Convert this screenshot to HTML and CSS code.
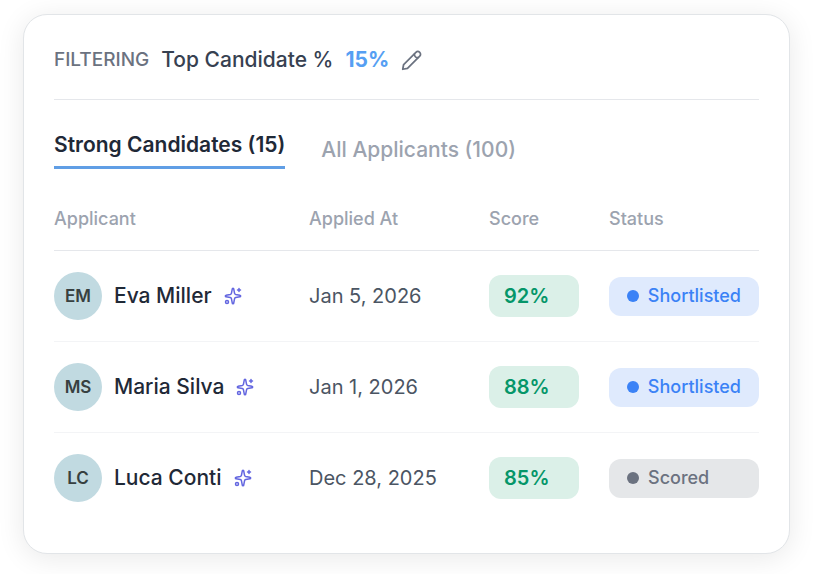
FILE: index.html
```html
<!DOCTYPE html>
<html lang="en">

<head>
    <meta charset="UTF-8">
    <meta name="viewport" content="width=device-width, initial-scale=1.0">
    <title>Candidates</title>
    <link rel="stylesheet" href="styles.css">
</head>

<body>
    <svg class="icon-defs" aria-hidden="true">
        <symbol id="sparkles" viewBox="0 0 24 24">
            <path d="M11 2.8a1 1 0 0 1 2 0l1.1 5.6a2 2 0 0 0 1.5 1.5l5.6 1.1a1 1 0 0 1 0 2l-5.6 1.1a2 2 0 0 0-1.5 1.5L13 21.2a1 1 0 0 1-2 0l-1.1-5.6a2 2 0 0 0-1.5-1.5L2.8 13a1 1 0 0 1 0-2l5.6-1.1a2 2 0 0 0 1.5-1.5z" />
            <path d="M20 2v4M22 4h-4" />
            <circle cx="4" cy="20" r="2" />
        </symbol>
    </svg>

    <main class="card">
        <div class="filter">
            <span class="filter-label">FILTERING</span>
            <span class="filter-name">Top Candidate %</span>
            <span class="filter-value">15%</span>
            <button class="edit" aria-label="Edit filter">
                <svg viewBox="0 0 24 24">
                    <path d="M2 22l1-5.4L17 2.7a3.1 3.1 0 0 1 4.4 4.4L7.4 21z" />
                    <path d="M15.4 4.4c-.7 2.4 1.8 5 4.4 4.3" />
                </svg>
            </button>
        </div>

        <div class="tabs">
            <button class="tab active">Strong Candidates (15)</button>
            <button class="tab">All Applicants (100)</button>
        </div>

        <table class="applicants">
            <thead>
                <tr>
                    <th>Applicant</th>
                    <th class="col-date">Applied At</th>
                    <th class="col-score">Score</th>
                    <th class="col-status">Status</th>
                </tr>
            </thead>
            <tbody>
                <tr>
                    <td>
                        <div class="person">
                            <span class="avatar">EM</span>
                            <span class="name">Eva Miller</span>
                            <svg class="sparkles"><use href="#sparkles" /></svg>
                        </div>
                    </td>
                    <td class="date">Jan 5, 2026</td>
                    <td><div class="score">92%</div></td>
                    <td><div class="status shortlisted">Shortlisted</div></td>
                </tr>
                <tr>
                    <td>
                        <div class="person">
                            <span class="avatar">MS</span>
                            <span class="name">Maria Silva</span>
                            <svg class="sparkles"><use href="#sparkles" /></svg>
                        </div>
                    </td>
                    <td class="date">Jan 1, 2026</td>
                    <td><div class="score">88%</div></td>
                    <td><div class="status shortlisted">Shortlisted</div></td>
                </tr>
                <tr>
                    <td>
                        <div class="person">
                            <span class="avatar">LC</span>
                            <span class="name">Luca Conti</span>
                            <svg class="sparkles"><use href="#sparkles" /></svg>
                        </div>
                    </td>
                    <td class="date">Dec 28, 2025</td>
                    <td><div class="score">85%</div></td>
                    <td><div class="status scored">Scored</div></td>
                </tr>
            </tbody>
        </table>
    </main>
</body>

</html>
```
FILE: styles.css
```css
* {
    box-sizing: border-box;
    margin: 0;
    padding: 0;
}

body {
    padding: 14px 26px 20px 23px;
    background: #fff;
    font-family: Inter, "Liberation Sans", sans-serif;
    font-size: 20px;
    line-height: 26px;
    color: #1f2937;
}

button {
    border: none;
    background: none;
    font: inherit;
    color: inherit;
    cursor: pointer;
}

.icon-defs {
    position: absolute;
    width: 0;
    height: 0;
}

.card {
    padding: 30px;
    background: #fff;
    border: 1px solid #e2e5e8;
    border-radius: 24px;
    box-shadow: 0 4px 28px rgba(0, 0, 0, 0.09);
}

/* Filter bar */
.filter {
    display: flex;
    align-items: center;
    gap: 12px;
    padding-bottom: 24px;
    border-bottom: 1px solid #e5e7eb;
    line-height: 30px;
}

.filter-label {
    font-size: 19px;
    font-weight: 500;
    color: #6b7280;
}

.filter-name {
    font-size: 21px;
    font-weight: 500;
    color: #374151;
}

.filter-value {
    font-size: 21px;
    font-weight: 700;
    color: #569ff3;
}

.edit {
    display: flex;
}

.edit svg {
    width: 21px;
    height: 21px;
    fill: none;
    stroke: #6b7280;
    stroke-width: 2;
    stroke-linejoin: round;
}

/* Tabs */
.tabs {
    display: flex;
    align-items: center;
    gap: 36px;
    padding: 31px 0;
}

.tab {
    font-size: 21px;
    font-weight: 500;
    color: #9ca3af;
}

.tab.active {
    padding: 1px 0 8px;
    border-bottom: 3px solid #609ee5;
    font-weight: 600;
    color: #1f2937;
}

/* Table */
.applicants {
    width: 100%;
    table-layout: fixed;
    border-spacing: 0;
}

th {
    padding: 6px 0 18px;
    border-bottom: 1px solid #e5e7eb;
    font-size: 18px;
    font-weight: 500;
    text-align: left;
    color: #9ca3af;
}

td {
    height: 91px;
    border-bottom: 1px solid #f3f4f6;
}

tr:last-child td {
    height: 90px;
    border-bottom: none;
}

.col-date {
    width: 180px;
}

.col-score {
    width: 120px;
}

.col-status {
    width: 150px;
}

.person {
    display: flex;
    align-items: center;
    gap: 12px;
}

.avatar {
    display: flex;
    align-items: center;
    justify-content: center;
    width: 48px;
    height: 48px;
    border-radius: 50%;
    background: #c1dae1;
    font-size: 17px;
    font-weight: 600;
    color: #374040;
}

.name {
    font-size: 21px;
    font-weight: 500;
}

.sparkles {
    width: 18px;
    height: 18px;
    fill: none;
    stroke: #6366e0;
    stroke-width: 2;
    stroke-linecap: round;
    stroke-linejoin: round;
}

.date {
    color: #4b5563;
}

.score {
    width: 90px;
    padding: 8px 15px;
    border-radius: 12px;
    background: #dbf0e8;
    font-weight: 600;
    color: #059669;
}

.status {
    display: flex;
    align-items: center;
    gap: 9px;
    height: 39px;
    padding: 0 18px;
    border-radius: 12px;
    font-size: 18px;
    font-weight: 500;
}

.status::before {
    content: "";
    width: 12px;
    height: 12px;
    border-radius: 50%;
    background: currentColor;
}

.shortlisted {
    background: #dfeafd;
    color: #3b82f6;
}

.scored {
    background: #e5e7e9;
    color: #6b7280;
}
```
